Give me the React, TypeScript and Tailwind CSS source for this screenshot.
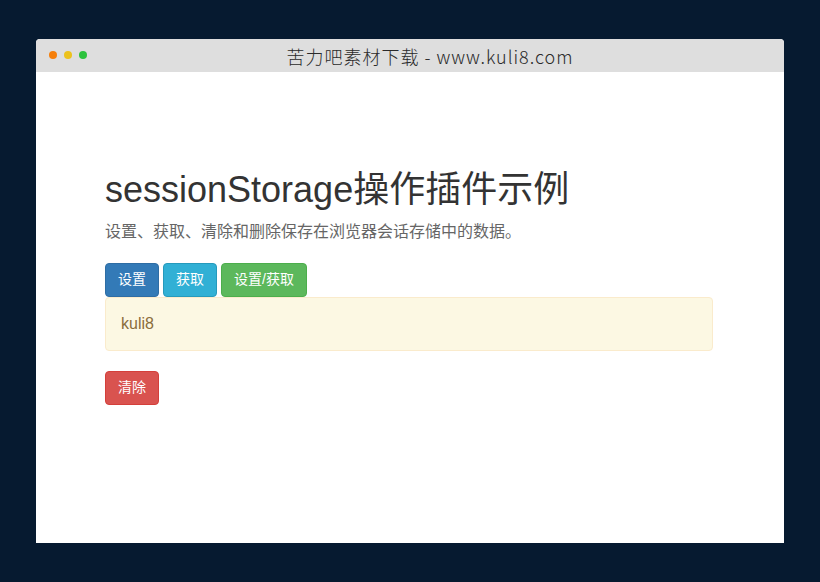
import React from "react";

const sans = { fontFamily: '"Liberation Sans", "Noto Sans CJK SC", sans-serif' };

export default function App() {
  return (
    <div className="min-h-[582px] w-full bg-[#061a30] pt-[39px] flex justify-center" style={sans}>
      <div className="w-[748px] h-[504px] bg-white rounded-t-[4px] flex flex-col overflow-hidden">
        <div className="relative h-[33px] bg-[#dedede] flex items-center justify-center shrink-0">
          <div className="absolute left-[13px] top-[12px] flex gap-[7px]">
            <span className="w-[8px] h-[8px] rounded-full bg-[#f57f0b]" />
            <span className="w-[8px] h-[8px] rounded-full bg-[#ecc21d]" />
            <span className="w-[8px] h-[8px] rounded-full bg-[#2cc23d]" />
          </div>
          <span
            className="text-[18px] text-[#2a2a2a] leading-none font-light tracking-[1px] pl-[40px]"
            style={{ fontFamily: '"Noto Sans CJK SC", sans-serif' }}
          >
            苦力吧素材下载 - www.kuli8.com
          </span>
        </div>
        <div className="w-[608px] ml-[69px] pt-[98px]">
          <h1 className="text-[36px] leading-[1.1] text-[#333] font-normal">sessionStorage操作插件示例</h1>
          <p className="mt-[10px] text-[16px] leading-[24px] text-[#666]">设置、获取、清除和删除保存在浏览器会话存储中的数据。</p>
          <div className="mt-[19px] flex gap-[4px]">
            <button className="h-[34px] px-[12px] text-[14px] text-white bg-[#337ab7] border border-[#2e6da4] rounded-[4px]">设置</button>
            <button className="h-[34px] px-[12px] text-[14px] text-white bg-[#31b0d5] border border-[#269abc] rounded-[4px]">获取</button>
            <button className="h-[34px] px-[12px] text-[14px] text-white bg-[#5cb85c] border border-[#4cae4c] rounded-[4px]">设置/获取</button>
          </div>
          <div className="h-[54px] flex items-center px-[15px] bg-[#fcf8e3] border border-[#faebcc] rounded-[4px] text-[16px] text-[#8a6d3b]">
            kuli8
          </div>
          <div className="mt-[20px]">
            <button className="h-[34px] px-[12px] text-[14px] text-white bg-[#d9534f] border border-[#d43f3a] rounded-[4px]">清除</button>
          </div>
        </div>
      </div>
    </div>
  );
}
